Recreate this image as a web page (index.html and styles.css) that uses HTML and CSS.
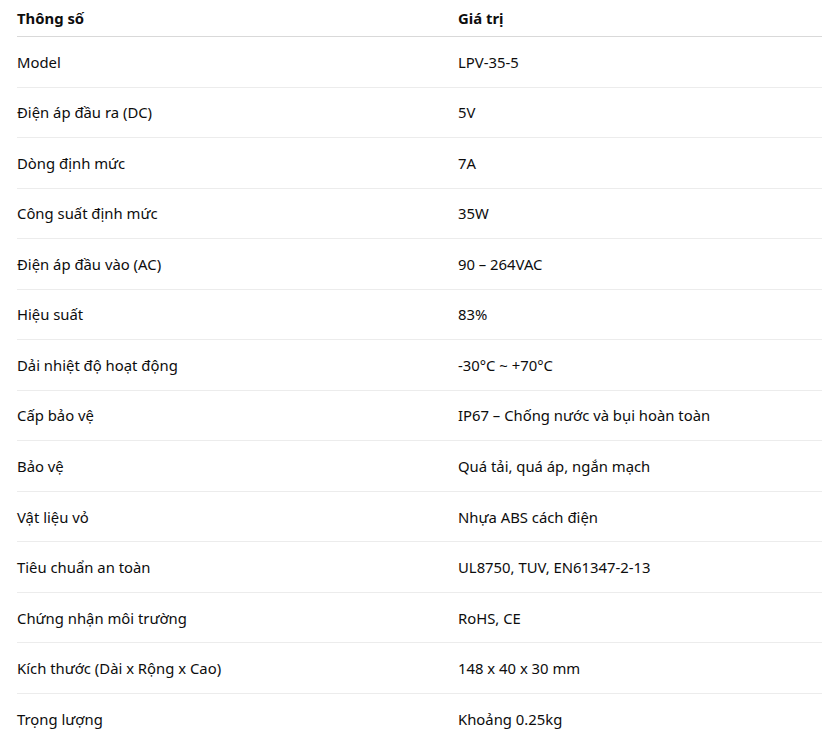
FILE: index.html
```html
<!DOCTYPE html>
<html lang="vi">
<head>
<meta charset="utf-8">
<link rel="stylesheet" href="styles.css">
</head>
<body>
<div class="wrap">
<table class="spec">
<thead>
<tr><th class="c1">Thông số</th><th class="c2">Giá trị</th></tr>
</thead>
<tbody>
<tr><td>Model</td><td>LPV-35-5</td></tr>
<tr><td>Điện áp đầu ra (DC)</td><td>5V</td></tr>
<tr><td>Dòng định mức</td><td>7A</td></tr>
<tr><td>Công suất định mức</td><td>35W</td></tr>
<tr><td>Điện áp đầu vào (AC)</td><td>90 – 264VAC</td></tr>
<tr><td>Hiệu suất</td><td>83%</td></tr>
<tr><td>Dải nhiệt độ hoạt động</td><td>-30°C ~ +70°C</td></tr>
<tr><td>Cấp bảo vệ</td><td>IP67 – Chống nước và bụi hoàn toàn</td></tr>
<tr><td>Bảo vệ</td><td>Quá tải, quá áp, ngắn mạch</td></tr>
<tr><td>Vật liệu vỏ</td><td>Nhựa ABS cách điện</td></tr>
<tr><td>Tiêu chuẩn an toàn</td><td>UL8750, TUV, EN61347-2-13</td></tr>
<tr><td>Chứng nhận môi trường</td><td>RoHS, CE</td></tr>
<tr><td>Kích thước (Dài x Rộng x Cao)</td><td>148 x 40 x 30 mm</td></tr>
<tr><td>Trọng lượng</td><td>Khoảng 0.25kg</td></tr>
</tbody>
</table>
</div>
</body>
</html>
```
FILE: styles.css
```css
html, body {
  margin: 0;
  padding: 0;
  background: #ffffff;
}
body {
  font-family: "Noto Sans", "Open Sans", sans-serif;
  font-size: 14.85px;
  color: #0d0d0d;
  overflow: hidden;
}
.wrap {
  padding-left: 17px;
}
.spec {
  border-collapse: collapse;
  width: 820px;
}
.spec th {
  text-align: left;
  font-weight: 700;
  line-height: 20px;
  padding: 8px 0 8px 0;
  border-bottom: 1px solid #d9d9d9;
}
.spec th.c1 {
  width: 441px;
}
.spec td {
  line-height: 20px;
  padding: 14.77px 0 14.77px;
  border-bottom: 1px solid #ececec;
  vertical-align: middle;
}
```
